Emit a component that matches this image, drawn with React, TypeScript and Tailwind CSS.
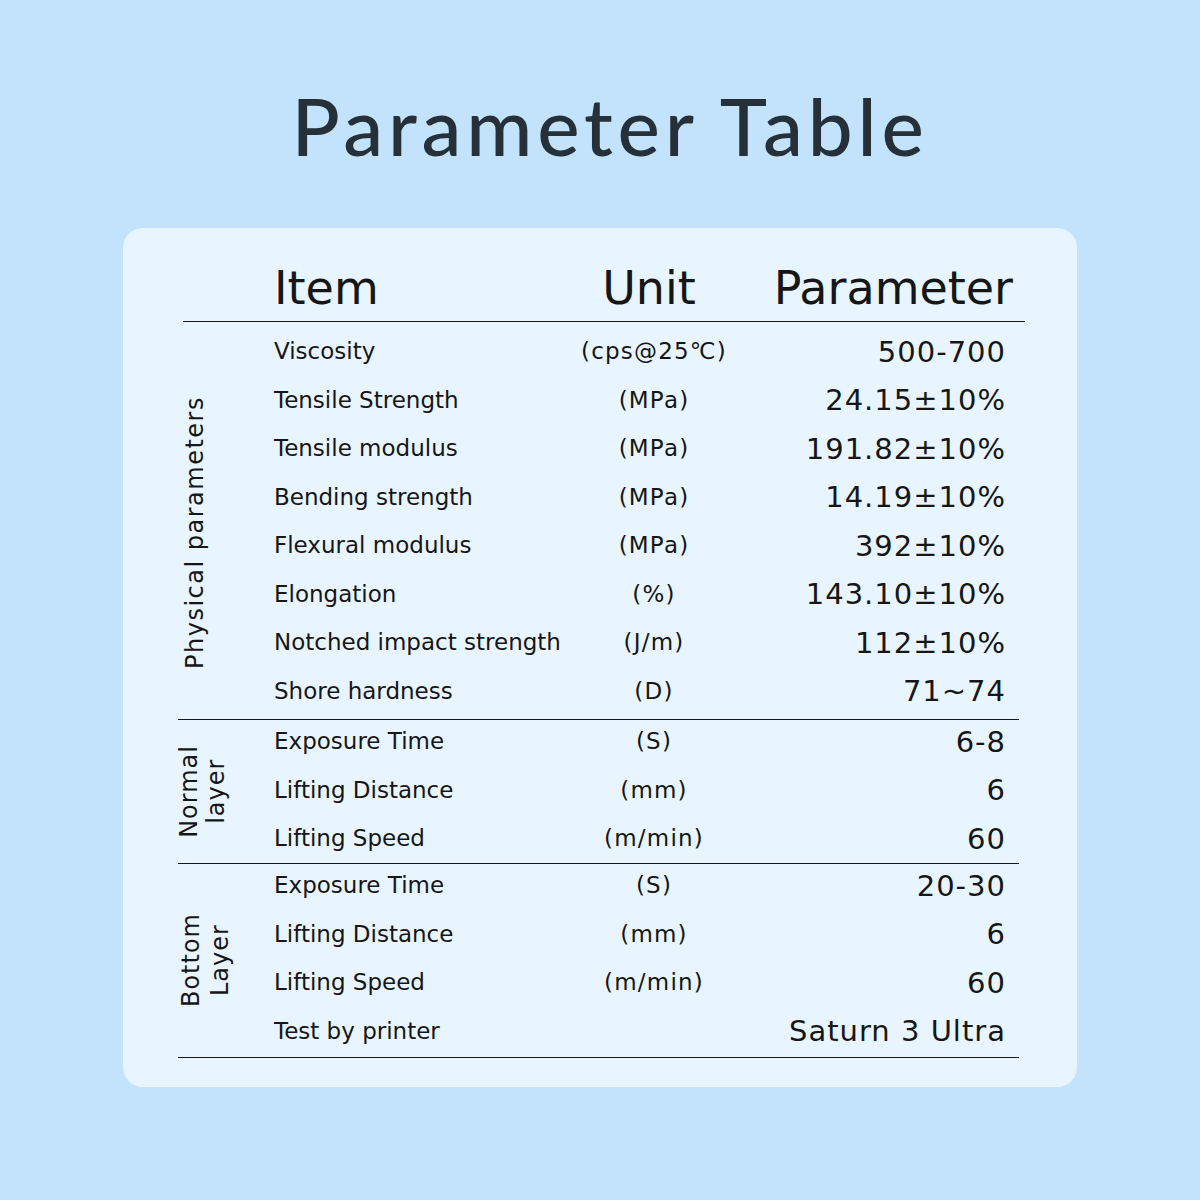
const physical = [
  ["Viscosity", "(cps@25℃)", "500-700"],
  ["Tensile Strength", "(MPa)", "24.15±10%"],
  ["Tensile modulus", "(MPa)", "191.82±10%"],
  ["Bending strength", "(MPa)", "14.19±10%"],
  ["Flexural modulus", "(MPa)", "392±10%"],
  ["Elongation", "(%)", "143.10±10%"],
  ["Notched impact strength", "(J/m)", "112±10%"],
  ["Shore hardness", "(D)", "71~74"],
];

const normal = [
  ["Exposure Time", "(S)", "6-8"],
  ["Lifting Distance", "(mm)", "6"],
  ["Lifting Speed", "(m/min)", "60"],
];

const bottom = [
  ["Exposure Time", "(S)", "20-30"],
  ["Lifting Distance", "(mm)", "6"],
  ["Lifting Speed", "(m/min)", "60"],
  ["Test by printer", "", "Saturn 3 Ultra"],
];

const Row = ({ item, unit, value }: { item: string; unit: string; value: string }) => (
  <div className="flex items-center h-[48.5px]">
    <div className="w-[300px] text-[23px]">{item}</div>
    <div className="w-[160px] text-center text-[23px] tracking-[1.2px]">{unit}</div>
    <div className="flex-1 text-right text-[29px] tracking-[1px] pr-[13px] pt-[2px]">{value}</div>
  </div>
);

const App = () => {
  return (
    <div
      className="min-h-[1200px] w-[1200px] bg-[#c3e3fd] text-[#161616] flex flex-col items-center"
      style={{ fontFamily: "'DejaVu Sans', sans-serif" }}
    >
      <h1
        className="mt-[80px] pl-[20px] text-[80px] leading-[90px] font-medium text-[#263039] tracking-[4.8px]"
        style={{ fontFamily: "Lato, sans-serif" }}
      >
        Parameter Table
      </h1>

      <div className="mt-[58px] w-[954px] h-[859px] bg-[#e8f5ff] rounded-[20px] pl-[55px] pr-[58px] pt-[28px]">
        {/* header */}
        <div className="flex items-end h-[66px] pb-[10px] border-b-[1.5px] border-[#161616] ml-[5px] mr-[-6px] text-[46px] leading-none">
          <div className="w-[91px]" />
          <div className="w-[300px]">Item</div>
          <div className="w-[150px] text-center">Unit</div>
          <div className="flex-1 text-right pr-[12px]">Parameter</div>
        </div>

        {/* physical */}
        <div className="flex border-b-[1.5px] border-[#161616] pt-[5px] pb-[4px]">
          <div className="w-[96px] flex items-center justify-start pl-[4px] pt-[22px]">
            <span className="[writing-mode:vertical-rl] rotate-180 text-[24px] leading-[26px] tracking-[1.5px]">
              Physical parameters
            </span>
          </div>
          <div className="flex-1">
            {physical.map(([a, b, c]) => (
              <Row key={a} item={a} unit={b} value={c} />
            ))}
          </div>
        </div>

        {/* normal layer */}
        <div className="flex border-b-[1.5px] border-[#161616] h-[144px]">
          <div className="w-[96px] flex items-center justify-start pr-[2px]">
            <span className="[writing-mode:vertical-rl] rotate-180 text-[24px] leading-[27px] tracking-[1px] text-center -ml-[2px]">
              Normal
              <br />
              layer
            </span>
          </div>
          <div className="flex-1 -mt-[3px]">
            {normal.map(([a, b, c]) => (
              <Row key={a} item={a} unit={b} value={c} />
            ))}
          </div>
        </div>

        {/* bottom layer */}
        <div className="flex border-b-[1.5px] border-[#161616] h-[194px]">
          <div className="w-[96px] flex items-center justify-start">
            <span className="[writing-mode:vertical-rl] rotate-180 text-[24px] leading-[29px] tracking-[1px] text-center -ml-[1px]">
              Bottom
              <br />
              Layer
            </span>
          </div>
          <div className="flex-1 -mt-[3px]">
            {bottom.map(([a, b, c]) => (
              <Row key={a} item={a} unit={b} value={c} />
            ))}
          </div>
        </div>
      </div>
    </div>
  );
};

export default App;
